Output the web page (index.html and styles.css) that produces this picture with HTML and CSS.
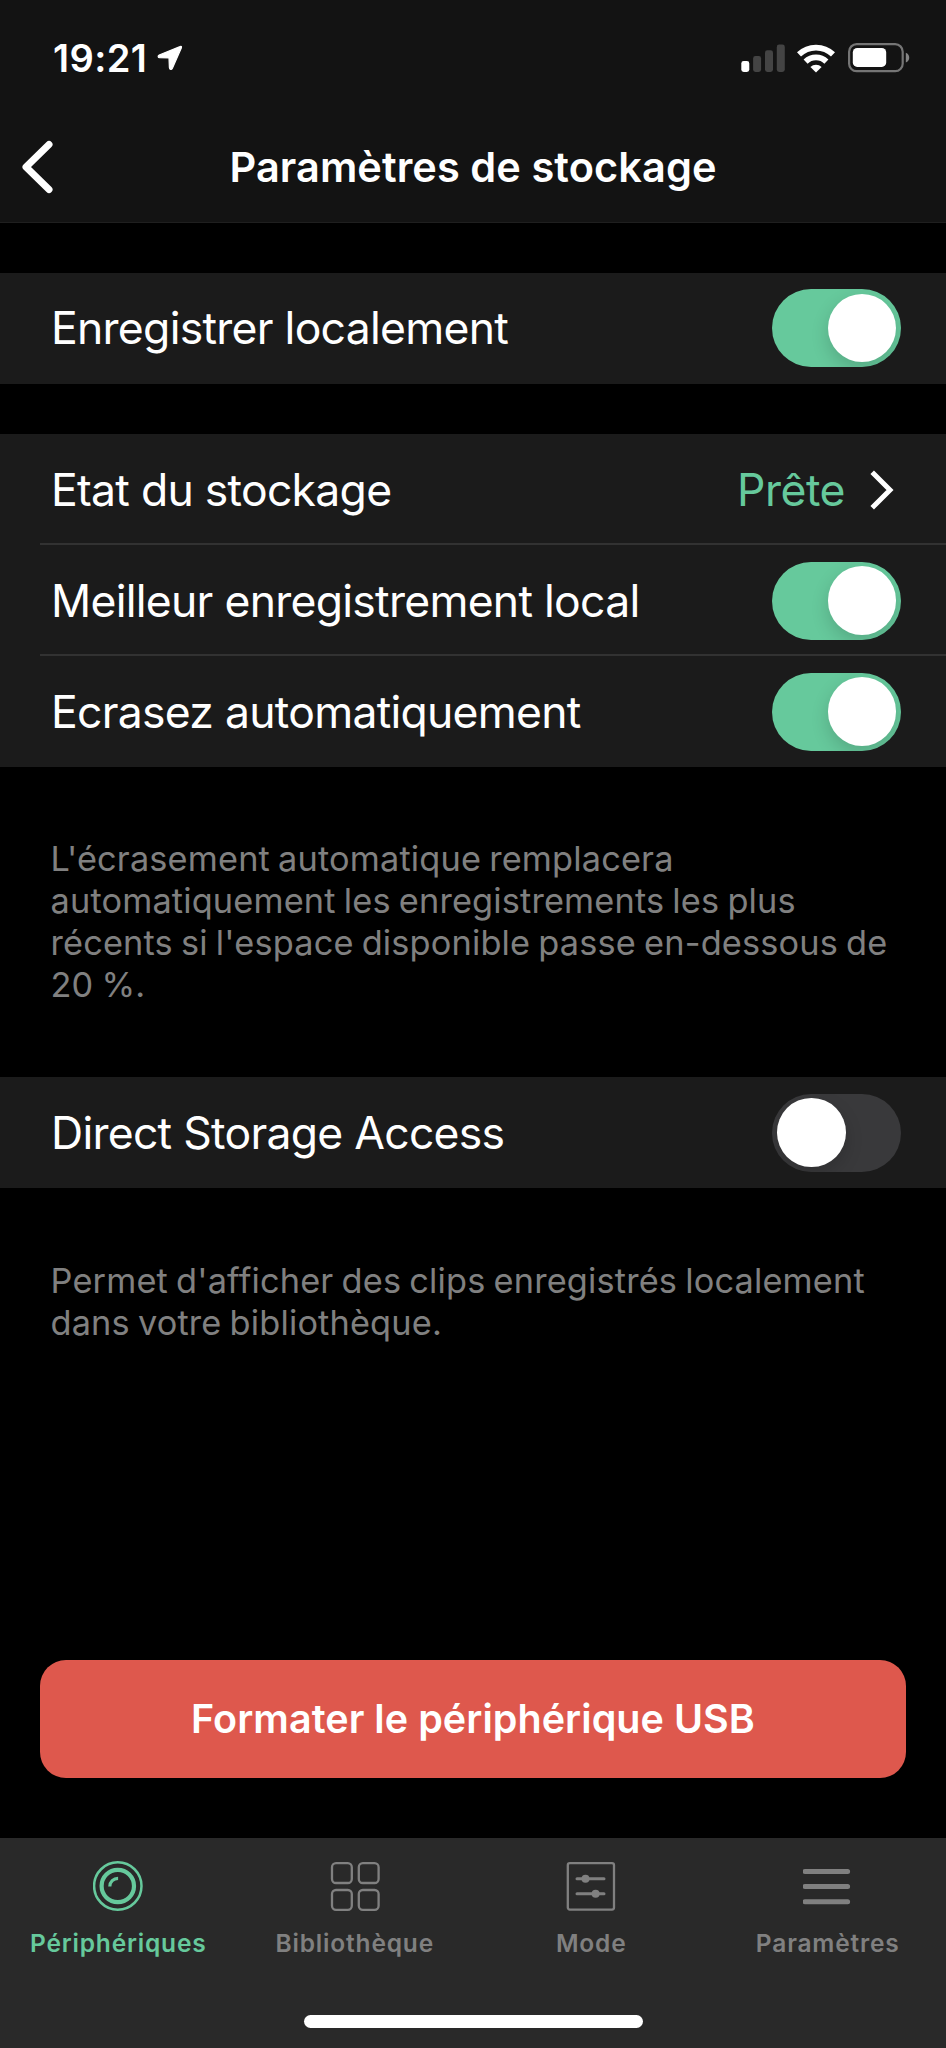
FILE: index.html
```html
<!DOCTYPE html>
<html lang="fr">
<head>
<meta charset="utf-8">
<title>Paramètres de stockage</title>
<link rel="stylesheet" href="styles.css">
</head>
<body>
<div class="screen">
  <header class="header">
    <div class="status">
      <div class="status-left">
        <span class="time">19:21</span>
        <svg class="location" width="26" height="26" viewBox="0 0 26 26"><path d="M23 1.6 2.2 10C.6 10.8.9 12.6 2.6 12.7L12 13 12.4 22.6C12.5 24.8 14.5 25.2 15.4 23.2L24.4 2.8C24.8 1.5 24.2 1 23 1.6Z" fill="#fff" stroke="#fff" stroke-width="1.2"/></svg>
      </div>
      <div class="status-right">
        <svg width="44" height="28" viewBox="0 0 44 28"><rect x=".3" y="17" width="8" height="11" rx="2.4" fill="#fff"/><rect x="12.1" y="12" width="8" height="16" rx="2.4" fill="#444"/><rect x="24" y="6.2" width="8" height="21.8" rx="2.4" fill="#444"/><rect x="35.8" y=".6" width="8" height="27.4" rx="2.4" fill="#444"/></svg>
        <svg class="wifi" width="38" height="29" viewBox="0 0 38 29"><g fill="none" stroke="#fff" stroke-width="5.8"><path d="M2 10.4A24.5 24.5 0 0 1 36 10.4"/><path d="M8.6 17.6A15 15 0 0 1 29.4 17.6"/></g><path d="M19 28.6 13.4 22.9A8.2 8.2 0 0 1 24.6 22.9Z" fill="#fff"/></svg>
        <svg class="battery" width="62" height="30" viewBox="0 0 62 30"><rect x="1.1" y="1.2" width="53.6" height="27" rx="7.5" fill="none" stroke="#757575" stroke-width="2.2"/><rect x="4.8" y="5" width="33.4" height="18.9" rx="4.4" fill="#fff"/><path d="M57.8 9.8C62.4 11.6 62.4 17.9 57.8 19.6Z" fill="#858585"/></svg>
      </div>
    </div>
    <div class="navbar">
      <svg class="back" width="34" height="56" viewBox="0 0 34 56"><path d="M28 5.5 5 28 28 50.5" fill="none" stroke="#fff" stroke-width="7" stroke-linecap="round" stroke-linejoin="round"/></svg>
      <h1 class="title">Paramètres de stockage</h1>
    </div>
  </header>

  <main class="content">
    <section class="group">
      <div class="row"><span class="label">Enregistrer localement</span><span class="toggle on"><span class="knob"></span></span></div>
    </section>
    <section class="group group-storage">
      <div class="row">
        <span class="label">Etat du stockage</span>
        <span class="value"><span class="value-text">Prête</span>
          <svg width="24" height="40" viewBox="0 0 24 40"><path d="M2.2 2.2 20 20 2.2 37.8" fill="none" stroke="#fff" stroke-width="5"/></svg></span>
      </div>
      <div class="row divided"><span class="label">Meilleur enregistrement local</span><span class="toggle on"><span class="knob"></span></span></div>
      <div class="row divided"><span class="label">Ecrasez automatiquement</span><span class="toggle on"><span class="knob"></span></span></div>
    </section>
    <p class="note">L'écrasement automatique remplacera<br>automatiquement les enregistrements les plus<br>récents si l'espace disponible passe en-dessous de<br>20 %.</p>
    <section class="group group-access">
      <div class="row"><span class="label">Direct Storage Access</span><span class="toggle"><span class="knob"></span></span></div>
    </section>
    <p class="note note-access">Permet d'afficher des clips enregistrés localement<br>dans votre bibliothèque.</p>
    <button class="format">Formater le périphérique USB</button>
  </main>

  <footer class="footer">
    <nav class="tabs">
      <a class="tab active">
        <svg width="50" height="50" viewBox="0 0 50 50" fill="none" stroke="currentColor"><circle cx="24.8" cy="25" r="23.7" stroke-width="2.5"/><circle cx="24.8" cy="25" r="16.2" stroke-width="4.2"/><path d="M16.8 25.6A8.3 8.3 0 0 1 25.1 17.3" stroke-width="3.2"/></svg>
        <span>Périphériques</span>
      </a>
      <a class="tab">
        <svg width="50" height="50" viewBox="0 0 50 50" fill="none" stroke="currentColor" stroke-width="2.3"><rect x="2" y="2.2" width="19.8" height="19.8" rx="4"/><rect x="28.8" y="2.2" width="19.8" height="19.8" rx="4"/><rect x="2" y="29" width="19.8" height="19.8" rx="4"/><rect x="28.8" y="29" width="19.8" height="19.8" rx="4"/></svg>
        <span>Bibliothèque</span>
      </a>
      <a class="tab">
        <svg width="50" height="50" viewBox="0 0 50 50" fill="none" stroke="currentColor" stroke-width="2.3"><rect x="1.8" y="2.2" width="46.2" height="46.4" rx="2"/><path d="M11 17.7H38M11 32.7H38" stroke-width="3" stroke-linecap="round"/><circle cx="19.5" cy="17.7" r="4" fill="currentColor" stroke="none"/><circle cx="29.6" cy="32.7" r="4" fill="currentColor" stroke="none"/></svg>
        <span>Mode</span>
      </a>
      <a class="tab">
        <svg width="50" height="50" viewBox="0 0 50 50" fill="none" stroke="currentColor" stroke-width="5" stroke-linecap="round"><path d="M2 10.5H44.6M2 25.6H44.6M2 40.7H44.6"/></svg>
        <span>Paramètres</span>
      </a>
    </nav>
    <div class="home-indicator"></div>
  </footer>
</div>
</body>
</html>
```

FILE: styles.css
```css
* { box-sizing: border-box; }
body {
  margin: 0;
  background: #000;
  color: #fff;
  font-family: Inter, "Liberation Sans", sans-serif;
}
.screen {
  display: flex;
  flex-direction: column;
  width: 946px;
  height: 2048px;
  overflow: hidden;
}
.header {
  height: 223px;
  background: #131313;
  border-bottom: 1px solid #1f1f1f;
}
.status {
  display: flex;
  justify-content: space-between;
  align-items: center;
  height: 116px;
  padding: 0 36px 0 53px;
}
.status-left, .status-right { display: flex; align-items: center; }
.time {
  font-size: 38px;
  font-weight: 600;
  line-height: 46px;
  letter-spacing: 0.4px;
}
.location { margin-left: 9.5px; }
.wifi { margin-left: 12px; }
.battery { margin-left: 13px; }
.navbar {
  display: grid;
  grid-template-columns: 56px 1fr 56px;
  align-items: center;
  height: 101px;
}
.back { margin-left: 21px; }
.title {
  margin: 0;
  text-align: center;
  font-size: 41.5px;
  font-weight: 600;
  line-height: 50px;
  letter-spacing: 0.08px;
  white-space: nowrap;
}
.content {
  flex: 1;
  display: flex;
  flex-direction: column;
  padding-top: 49.5px;
}
.group { background: #1b1b1b; }
.group-storage { margin-top: 50.5px; }
.group-access { margin-top: 71px; }
.row {
  position: relative;
  display: flex;
  align-items: center;
  justify-content: space-between;
  height: 111px;
  padding: 0 45px 0 51px;
}
.divided::before {
  content: "";
  position: absolute;
  top: -2px;
  left: 40px;
  right: 0;
  height: 2px;
  background: #323232;
}
.label, .value-text {
  font-size: 44.5px;
  line-height: 54px;
  letter-spacing: -0.73px;
  white-space: nowrap;
}
.value { display: flex; align-items: center; gap: 25px; padding-right: 7px; }
.value-text { color: #66c99c; letter-spacing: -0.5px; }
.toggle {
  display: flex;
  align-items: center;
  width: 129px;
  height: 78px;
  padding: 0 5px;
  border-radius: 39px;
  background: #39393b;
  overflow: hidden;
}
.toggle.on { justify-content: flex-end; background: #66c99c; }
.knob {
  width: 68.5px;
  height: 68.5px;
  border-radius: 50%;
  background: #fff;
  box-shadow: 0 7px 18px rgba(0, 0, 0, 0.16);
}
.note {
  margin: 71px 0 0;
  padding-left: 50.5px;
  color: #808080;
  font-size: 34.3px;
  line-height: 42px;
  letter-spacing: 0.17px;
  word-spacing: -1.7px;
  white-space: nowrap;
}
.note-access { margin-top: 72px; }
.format {
  height: 118px;
  margin: auto 40px 60px;
  border: 0;
  border-radius: 26px;
  background: #de584d;
  color: #fff;
  font: 600 39.5px/48px Inter, "Liberation Sans", sans-serif;
  letter-spacing: 0.05px;
}
.footer {
  display: flex;
  flex-direction: column;
  align-items: center;
  justify-content: space-between;
  height: 210px;
  padding: 22.5px 0 20px;
  background: #292929;
}
.tabs { display: flex; width: 100%; }
.tab {
  flex: 1;
  display: flex;
  flex-direction: column;
  align-items: center;
  gap: 17.5px;
  color: #808080;
  font-size: 24.5px;
  font-weight: 600;
  line-height: 30px;
  letter-spacing: 0.82px;
}
.tab.active { color: #66c99c; }
.home-indicator {
  width: 339px;
  height: 13px;
  border-radius: 7px;
  background: #fff;
}
```
